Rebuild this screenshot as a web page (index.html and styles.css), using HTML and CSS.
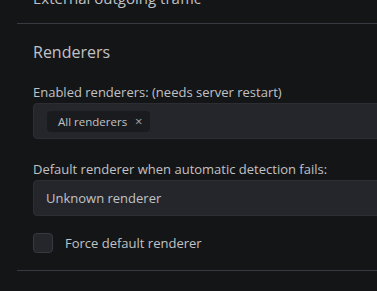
FILE: index.html
```html
<!DOCTYPE html>
<html>
<head>
<meta charset="utf-8">
<link rel="stylesheet" href="styles.css">
</head>
<body>
<div class="page">
  <div class="prev">
    <div class="prev-text">External outgoing traffic</div>
  </div>
  <section class="section">
    <h3 class="title">Renderers</h3>
    <div class="field">
      <label class="label">Enabled renderers: (needs server restart)</label>
      <div class="input multi">
        <span class="chip">All renderers <span class="chip-x">×</span></span>
      </div>
    </div>
    <div class="field">
      <label class="label">Default renderer when automatic detection fails:</label>
      <div class="input select">Unknown renderer</div>
    </div>
    <div class="check-row">
      <span class="checkbox"></span>
      <span class="check-label">Force default renderer</span>
    </div>
  </section>
  <div class="section end"></div>
</div>
</body>
</html>
```
FILE: styles.css
```css
html, body {
  margin: 0;
  padding: 0;
  background: #141517;
  height: 100%;
  overflow: hidden;
}
body {
  font-family: "Open Sans", "Noto Sans", sans-serif;
  color: #c1c2c5;
}
.page {
  padding-left: 17px;
}
.prev {
  margin-top: -11px;
  padding: 0 16px 15px;
}
.prev-text {
  font-size: 15px;
  line-height: 19px;
}
.section {
  border-top: 1px solid #373a40;
  padding: 16px 16px 17px;
  display: flex;
  flex-direction: column;
}
.title {
  margin: 0;
  font-size: 16px;
  font-weight: 400;
  line-height: 22px;
  margin-top: 1px;
}
.field {
  display: flex;
  flex-direction: column;
}
.title + .field {
  margin-top: 19px;
}
.field + .field {
  margin-top: 20px;
}
.label {
  font-size: 13px;
  line-height: 21px;
}
.input {
  height: 34px;
  border: 1px solid #2c2e33;
  border-radius: 4px;
  background: #25262b;
  display: flex;
  align-items: center;
  box-sizing: content-box;
  margin-right: -20px;
  font-size: 13px;
}
.multi {
  padding-left: 13px;
}
.chip {
  background: #1a1b1e;
  border-radius: 4px;
  height: 21px;
  display: inline-flex;
  align-items: center;
  padding: 0 7px 0 11px;
  font-size: 11.5px;
  gap: 8px;
}
.chip-x {
  font-size: 13px;
  color: #a6a7ab;
}
.select {
  padding-left: 12px;
}
.check-row {
  display: flex;
  align-items: center;
  gap: 12px;
  margin-top: 17px;
}
.checkbox {
  width: 18px;
  height: 18px;
  border: 1px solid #373a40;
  background: #25262b;
  border-radius: 4px;
}
.check-label {
  font-size: 13px;
}
.end {
  height: 40px;
}
```
